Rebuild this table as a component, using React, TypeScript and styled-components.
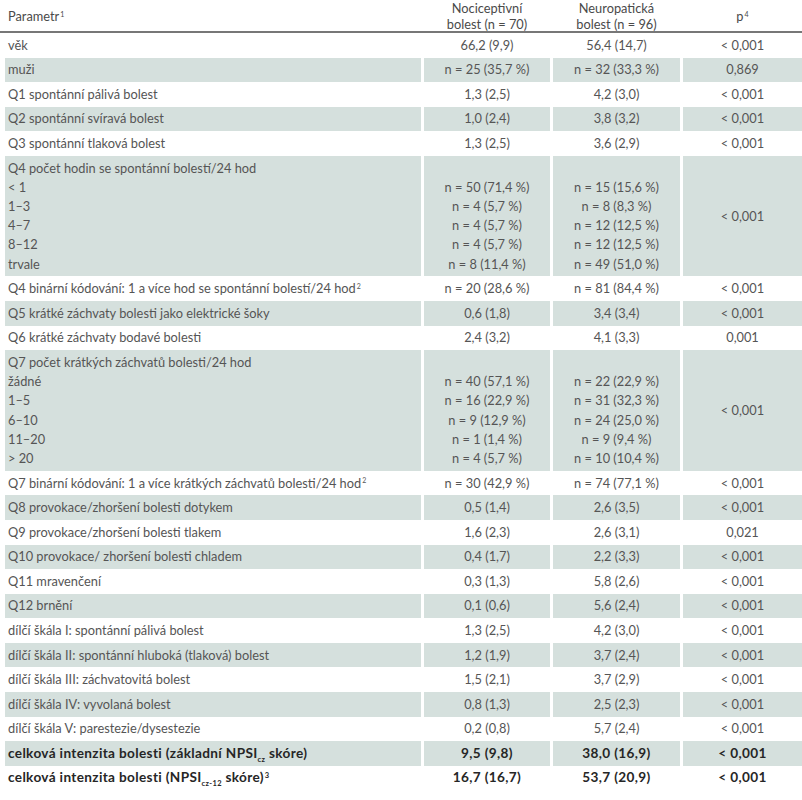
import React from 'react';
import styled, { createGlobalStyle } from 'styled-components';

const GlobalStyle = createGlobalStyle`
  html, body {
    margin: 0;
    padding: 0;
    background: #ffffff;
    overflow: hidden;
  }
`;

type Line = React.ReactNode;

interface TableRow {
  label: Line[];
  noci: Line[];
  neuro: Line[];
  p: Line;
  bold?: boolean;
}

// built inside a function, so the styled Sup/Sub below are defined by then
const buildRows = (): TableRow[] => [
  { label: ['věk'], noci: ['66,2 (9,9)'], neuro: ['56,4 (14,7)'], p: '< 0,001' },
  { label: ['muži'], noci: ['n = 25 (35,7 %)'], neuro: ['n = 32 (33,3 %)'], p: '0,869' },
  { label: ['Q1 spontánní pálivá bolest'], noci: ['1,3 (2,5)'], neuro: ['4,2 (3,0)'], p: '< 0,001' },
  { label: ['Q2 spontánní svíravá bolest'], noci: ['1,0 (2,4)'], neuro: ['3,8 (3,2)'], p: '< 0,001' },
  { label: ['Q3 spontánní tlaková bolest'], noci: ['1,3 (2,5)'], neuro: ['3,6 (2,9)'], p: '< 0,001' },
  {
    label: ['Q4 počet hodin se spontánní bolestí/24 hod', '< 1', '1–3', '4–7', '8–12', 'trvale'],
    noci: ['n = 50 (71,4 %)', 'n = 4 (5,7 %)', 'n = 4 (5,7 %)', 'n = 4 (5,7 %)', 'n = 8 (11,4 %)'],
    neuro: ['n = 15 (15,6 %)', 'n = 8 (8,3 %)', 'n = 12 (12,5 %)', 'n = 12 (12,5 %)', 'n = 49 (51,0 %)'],
    p: '< 0,001',
  },
  {
    label: [<>Q4 binární kódování: 1 a více hod se spontánní bolestí/24 hod<Sup>2</Sup></>],
    noci: ['n = 20 (28,6 %)'],
    neuro: ['n = 81 (84,4 %)'],
    p: '< 0,001',
  },
  { label: ['Q5 krátké záchvaty bolesti jako elektrické šoky'], noci: ['0,6 (1,8)'], neuro: ['3,4 (3,4)'], p: '< 0,001' },
  { label: ['Q6 krátké záchvaty bodavé bolesti'], noci: ['2,4 (3,2)'], neuro: ['4,1 (3,3)'], p: '0,001' },
  {
    label: ['Q7 počet krátkých záchvatů bolesti/24 hod', 'žádné', '1–5', '6–10', '11–20', '> 20'],
    noci: ['n = 40 (57,1 %)', 'n = 16 (22,9 %)', 'n = 9 (12,9 %)', 'n = 1 (1,4 %)', 'n = 4 (5,7 %)'],
    neuro: ['n = 22 (22,9 %)', 'n = 31 (32,3 %)', 'n = 24 (25,0 %)', 'n = 9 (9,4 %)', 'n = 10 (10,4 %)'],
    p: '< 0,001',
  },
  {
    label: [<>Q7 binární kódování: 1 a více krátkých záchvatů bolesti/24 hod<Sup>2</Sup></>],
    noci: ['n = 30 (42,9 %)'],
    neuro: ['n = 74 (77,1 %)'],
    p: '< 0,001',
  },
  { label: ['Q8 provokace/zhoršení bolesti dotykem'], noci: ['0,5 (1,4)'], neuro: ['2,6 (3,5)'], p: '< 0,001' },
  { label: ['Q9 provokace/zhoršení bolesti tlakem'], noci: ['1,6 (2,3)'], neuro: ['2,6 (3,1)'], p: '0,021' },
  { label: ['Q10 provokace/ zhoršení bolesti chladem'], noci: ['0,4 (1,7)'], neuro: ['2,2 (3,3)'], p: '< 0,001' },
  { label: ['Q11 mravenčení'], noci: ['0,3 (1,3)'], neuro: ['5,8 (2,6)'], p: '< 0,001' },
  { label: ['Q12 brnění'], noci: ['0,1 (0,6)'], neuro: ['5,6 (2,4)'], p: '< 0,001' },
  { label: ['dílčí škála I: spontánní pálivá bolest'], noci: ['1,3 (2,5)'], neuro: ['4,2 (3,0)'], p: '< 0,001' },
  { label: ['dílčí škála II: spontánní hluboká (tlaková) bolest'], noci: ['1,2 (1,9)'], neuro: ['3,7 (2,4)'], p: '< 0,001' },
  { label: ['dílčí škála III: záchvatovitá bolest'], noci: ['1,5 (2,1)'], neuro: ['3,7 (2,9)'], p: '< 0,001' },
  { label: ['dílčí škála IV: vyvolaná bolest'], noci: ['0,8 (1,3)'], neuro: ['2,5 (2,3)'], p: '< 0,001' },
  { label: ['dílčí škála V: parestezie/dysestezie'], noci: ['0,2 (0,8)'], neuro: ['5,7 (2,4)'], p: '< 0,001' },
  {
    label: [<>celková intenzita bolesti (základní NPSI<Sub>cz</Sub> skóre)</>],
    noci: ['9,5 (9,8)'],
    neuro: ['38,0 (16,9)'],
    p: '< 0,001',
    bold: true,
  },
  {
    label: [<>celková intenzita bolesti (NPSI<Sub>cz-12</Sub> skóre)<Sup>3</Sup></>],
    noci: ['16,7 (16,7)'],
    neuro: ['53,7 (20,9)'],
    p: '< 0,001',
    bold: true,
  },
];

export default function App() {
  const rows = buildRows();
  return (
    <>
      <GlobalStyle />
      <Table>
        <HeaderRow>
          <HeadCell $align="left">
            <span>
              Parametr<Sup>1</Sup>
            </span>
          </HeadCell>
          <HeadCell $align="center">
            <span>
              Nociceptivní
              <br />
              bolest (n = 70)
            </span>
          </HeadCell>
          <HeadCell $align="center">
            <span>
              Neuropatická
              <br />
              bolest (n = 96)
            </span>
          </HeadCell>
          <HeadCell $align="center">
            <span>
              p<Sup>4</Sup>
            </span>
          </HeadCell>
        </HeaderRow>

        {rows.map((row, i) => {
          const shaded = i % 2 === 1;
          const multi = row.label.length > 1;
          return (
            <Row key={i} $bold={row.bold}>
              <LabelCell $shaded={shaded}>
                {row.label.map((l, j) => (
                  <LineText key={j}>{l}</LineText>
                ))}
              </LabelCell>
              <ValueCell $shaded={shaded} $bottom={multi}>
                {row.noci.map((l, j) => (
                  <LineText key={j}>{l}</LineText>
                ))}
              </ValueCell>
              <ValueCell $shaded={shaded} $bottom={multi}>
                {row.neuro.map((l, j) => (
                  <LineText key={j}>{l}</LineText>
                ))}
              </ValueCell>
              <ValueCell $shaded={shaded}>
                <LineText>{row.p}</LineText>
              </ValueCell>
            </Row>
          );
        })}
      </Table>
    </>
  );
}

const Table = styled.div`
  display: flex;
  flex-direction: column;
  width: 802px;

  font-family: Lato, 'Open Sans', 'Noto Sans', sans-serif;
  font-size: 12.8px;
  color: #555555;
`;

const HeaderRow = styled.div`
  display: grid;
  grid-template-columns: 416px 126px 127px 1fr;
  column-gap: 3px;
  padding-left: 5px;
  height: 31px;
  border-bottom: 2px solid #777777;
`;

const HeadCell = styled.div<{ $align: 'left' | 'center' }>`
  display: flex;
  align-items: center;
  justify-content: ${(p) => (p.$align === 'left' ? 'flex-start' : 'center')};
  padding-left: ${(p) => (p.$align === 'left' ? '3px' : '0')};
  text-align: ${(p) => p.$align};
  line-height: 16px;
  color: #4a4a4a;
`;

const Row = styled.div<{ $bold?: boolean }>`
  display: grid;
  grid-template-columns: 416px 126px 127px 1fr;
  column-gap: 3px;
  padding-left: 5px;

  font-weight: ${(p) => (p.$bold ? 700 : 400)};
  font-size: ${(p) => (p.$bold ? '13.6px' : 'inherit')};
  letter-spacing: ${(p) => (p.$bold ? '0.35px' : 'normal')};
  color: ${(p) => (p.$bold ? '#262626' : '#555555')};
`;

const Cell = styled.div<{ $shaded: boolean }>`
  display: flex;
  flex-direction: column;
  padding: 2.7px 0;
  line-height: 19.2px;
  background: ${(p) => (p.$shaded ? '#d5e0dd' : '#ffffff')};
`;

const LabelCell = styled(Cell)`
  padding-left: 3px;
  align-items: flex-start;
`;

const ValueCell = styled(Cell)<{ $bottom?: boolean }>`
  align-items: center;
  justify-content: ${(p) => (p.$bottom ? 'flex-end' : 'center')};
  text-align: center;
`;

const LineText = styled.div`
  white-space: nowrap;
`;

const Sup = styled.sup`
  font-size: 0.55em;
  line-height: 0;
  vertical-align: 0.6em;
  margin-left: 1px;
`;

const Sub = styled.sub`
  font-size: 0.55em;
  line-height: 0;
  vertical-align: -0.5em;
`;
